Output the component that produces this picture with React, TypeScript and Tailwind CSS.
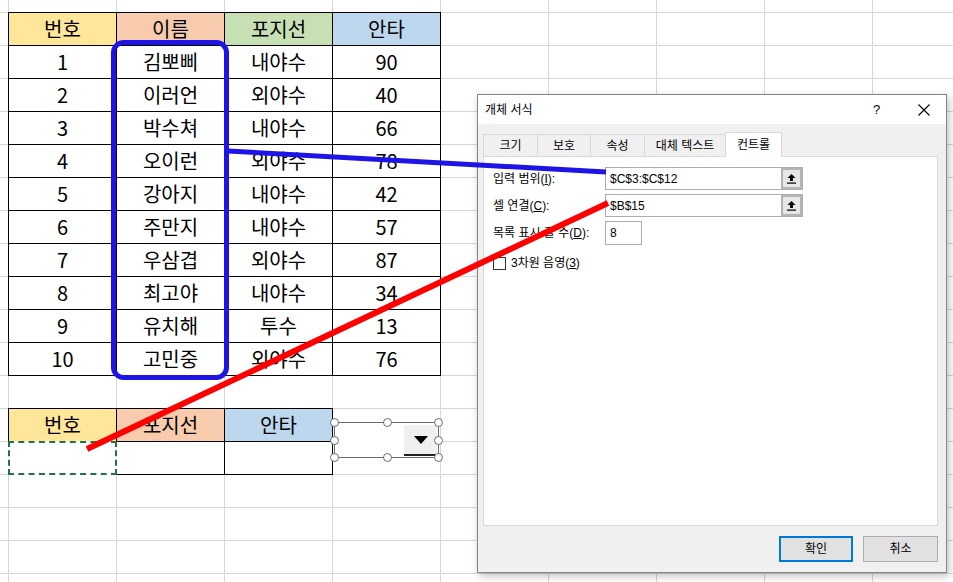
import React from 'react';

// Sheet data: 번호, 이름, 포지선, 안타
const roster: [number, string, string, number][] = [
    [1, '김뽀삐', '내야수', 90],
    [2, '이러언', '외야수', 40],
    [3, '박수쳐', '내야수', 66],
    [4, '오이런', '외야수', 78],
    [5, '강아지', '내야수', 42],
    [6, '주만지', '내야수', 57],
    [7, '우삼겹', '외야수', 87],
    [8, '최고야', '내야수', 34],
    [9, '유치해', '투수', 13],
    [10, '고민중', '외야수', 76]
];

const cell = 'h-[33px] border-r border-b border-black flex items-center justify-center';

const tabs = [
    { label: '크기', w: 'w-[55px]' },
    { label: '보호', w: 'w-[54px]' },
    { label: '속성', w: 'w-[55px]' },
    { label: '대체 텍스트', w: 'w-[82px]' }
];

/** Small up-arrow "collapse dialog" button used beside range inputs. */
const RefButton: React.FC = () => (
    <div className="w-[21px] h-full border-2 border-[#b4b4b4] bg-[#e6e6e6] flex items-center justify-center">
        <svg width="11" height="11" viewBox="0 0 11 11">
            <path d="M5.5 1 L9.5 5 H7 V8 H4 V5 H1.5 Z" fill="#000" />
            <rect x="1" y="9.5" width="9" height="1.2" fill="#000" />
        </svg>
    </div>
);

const FieldRow: React.FC<{ label: React.ReactNode; children: React.ReactNode }> = ({ label, children }) => (
    <div className="flex items-center h-[23px]">
        <div className="w-[112px] leading-none">{label}</div>
        {children}
    </div>
);

const Handle: React.FC<{ className: string }> = ({ className }) => (
    <div className={`absolute w-[9px] h-[9px] rounded-full border border-[#6b6b6b] bg-white ${className}`} />
);

export default function App() {
    return (
        <div className="relative w-[953px] h-[582px] overflow-hidden bg-white bg-[linear-gradient(to_right,#d6d6d6_1px,transparent_1px),linear-gradient(to_bottom,#d6d6d6_1px,transparent_1px)] bg-[size:108px_33px] bg-[position:8px_12px] font-['Noto_Sans_CJK_KR',sans-serif] text-[20px] text-black">
            <div className="flex flex-col pl-[8px] pt-[12px]">
                {/* Roster table */}
                <div className="grid grid-cols-[repeat(4,108px)] w-max border-l border-t border-black bg-white">
                    <div className={`${cell} bg-[#ffe699]`}>번호</div>
                    <div className={`${cell} bg-[#f8cbad]`}>이름</div>
                    <div className={`${cell} bg-[#c6e0b4]`}>포지선</div>
                    <div className={`${cell} bg-[#bdd7ee]`}>안타</div>
                    {roster.map(([no, name, pos, hits]) => (
                        <React.Fragment key={no}>
                            <div className={cell}>{no}</div>
                            <div className={cell}>{name}</div>
                            <div className={cell}>{pos}</div>
                            <div className={cell}>{hits}</div>
                        </React.Fragment>
                    ))}
                </div>

                {/* Lookup table */}
                <div className="mt-[32px] grid grid-cols-[repeat(3,108px)] w-max border-l border-t border-black bg-white">
                    <div className={`${cell} bg-[#ffe699]`}>번호</div>
                    <div className={`${cell} bg-[#f8cbad]`}>포지선</div>
                    <div className={`${cell} bg-[#bdd7ee]`}>안타</div>
                    <div className={`${cell} relative`}>
                        <div className="absolute -left-[1px] -top-[1px] w-[109px] h-[34px] bg-white border-2 border-dashed border-[#217346]" />
                    </div>
                    <div className={cell} />
                    <div className={cell} />
                </div>
            </div>

            {/* Combo box form control, selected */}
            <div className="absolute left-[334px] top-[422px] w-[105px] h-[36px] border border-[#6b6b6b] bg-white">
                <div className="absolute right-[1px] top-[2px] w-[33px] h-[31px] bg-[#efefef] border-b-2 border-[#222] flex items-center justify-center">
                    <svg width="14" height="8" viewBox="0 0 14 8">
                        <path d="M0 0 H14 L7 8 Z" fill="#000" />
                    </svg>
                </div>
                <Handle className="-left-[5px] -top-[5px]" />
                <Handle className="left-[48px] -top-[5px]" />
                <Handle className="-right-[5px] -top-[5px]" />
                <Handle className="-left-[5px] top-[13px]" />
                <Handle className="-right-[5px] top-[13px]" />
                <Handle className="-left-[5px] -bottom-[5px]" />
                <Handle className="left-[48px] -bottom-[5px]" />
                <Handle className="-right-[5px] -bottom-[5px]" />
            </div>

            {/* 개체 서식 dialog */}
            <div className="absolute left-[477px] top-[94px] w-[470px] h-[479px] flex flex-col border border-[#858585] bg-[#f0f0f0] shadow-[2px_3px_8px_rgba(0,0,0,0.25)] font-['Liberation_Sans','Noto_Sans_CJK_KR',sans-serif] text-[12px]">
                <div className="h-[29px] bg-white flex items-center pl-[7px] shrink-0">
                    <span className="flex-1">개체 서식</span>
                    <span className="w-[45px] text-[13px]">?</span>
                    <svg width="12" height="12" viewBox="0 0 12 12" className="mr-[16px]">
                        <path d="M0.5 0.5 L11.5 11.5 M11.5 0.5 L0.5 11.5" stroke="#000" strokeWidth="1.1" />
                    </svg>
                </div>

                <div className="flex-1 flex flex-col pl-[5px] pr-[8px]">
                    <div className="flex items-end h-[32px]">
                        {tabs.map(t => (
                            <div key={t.label} className={`${t.w} h-[22px] -mr-px border border-b-0 border-[#d9d9d9] flex items-center justify-center`}>
                                {t.label}
                            </div>
                        ))}
                        <div className="w-[57px] h-[25px] relative z-10 -mb-px bg-white border border-b-0 border-[#d9d9d9] flex items-center justify-center">
                            컨트롤
                        </div>
                    </div>

                    <div className="h-[370px] bg-white border border-[#d9d9d9] pl-[9px] pt-[10px] flex flex-col gap-[4px]">
                        <FieldRow label={<>입력 범위(<span className="underline">I</span>):</>}>
                            <div className="flex w-[198px] h-[23px] border border-[#adadad]">
                                <div className="flex-1 pl-[4px] flex items-center">$C$3:$C$12</div>
                                <RefButton />
                            </div>
                        </FieldRow>
                        <FieldRow label={<>셀 연결(<span className="underline">C</span>):</>}>
                            <div className="flex w-[198px] h-[23px] border border-[#adadad]">
                                <div className="flex-1 pl-[4px] flex items-center">$B$15</div>
                                <RefButton />
                            </div>
                        </FieldRow>
                        <FieldRow label={<>목록 표시 줄 수(<span className="underline">D</span>):</>}>
                            <div className="w-[37px] h-[24px] border border-[#adadad] pl-[4px] flex items-center">8</div>
                        </FieldRow>
                        <div className="flex items-center gap-[5px] mt-[6px]">
                            <div className="w-[13px] h-[13px] border border-[#333] bg-white" />
                            <span>3차원 음영(<span className="underline">3</span>)</span>
                        </div>
                    </div>

                    <div className="flex justify-end gap-[10px] mt-[10px]">
                        <button className="w-[74px] h-[26px] bg-[#e1e1e1] border-2 border-[#0078d7]">확인</button>
                        <button className="w-[75px] h-[26px] bg-[#e1e1e1] border border-[#adadad]">취소</button>
                    </div>
                </div>
            </div>

            {/* Annotation strokes */}
            <svg className="absolute inset-0 pointer-events-none" width="953" height="582" viewBox="0 0 953 582">
                <rect x="113.5" y="42.5" width="113" height="335" rx="10" fill="none" stroke="#1e14e6" strokeWidth="5" />
                <line x1="228" y1="151" x2="606" y2="172" stroke="#1e14e6" strokeWidth="5" />
                <line x1="87" y1="449" x2="608" y2="203" stroke="#ff0000" strokeWidth="6" />
            </svg>
        </div>
    );
}
